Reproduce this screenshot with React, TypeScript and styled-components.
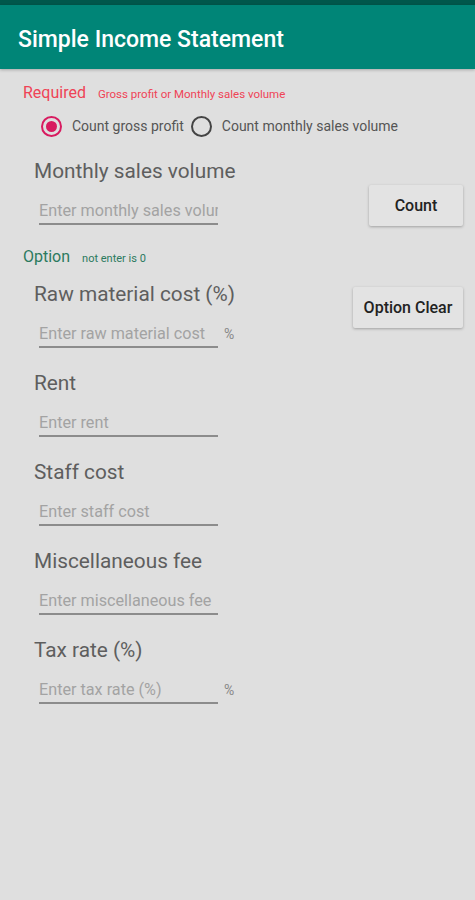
import React from 'react';

import styled, { createGlobalStyle } from 'styled-components';

const GlobalStyle = createGlobalStyle`
  html, body {
    margin: 0;
    padding: 0;
    background: #dfdfdf;
    font-family: Roboto, 'Noto Sans', sans-serif;
  }
`;

const Page = styled.div`
  width: 475px;
  min-height: 900px;
  background: #dfdfdf;
`;

const StatusBar = styled.div`
  height: 5px;
  background: #00574b;
`;

const AppBar = styled.div`
  display: flex;
  align-items: center;
  box-sizing: border-box;
  height: 64px;
  padding: 4px 0 0 18px;
  background: #008577;
  box-shadow: 0 1px 3px rgba(0, 0, 0, 0.25);
  color: #fff;
  font-size: 23px;
  font-weight: 500;
`;

const Content = styled.div`
  display: flex;
  flex-direction: column;
  padding: 14px 12px 0 23px;
`;

const SectionHead = styled.div<{ $color: string; $mt?: number }>`
  display: flex;
  align-items: baseline;
  gap: 12px;
  height: 20px;
  margin-top: ${(p) => p.$mt || 0}px;
  color: ${(p) => p.$color};
  font-size: 16px;
`;

const Note = styled.span<{ $size: number }>`
  font-size: ${(p) => p.$size}px;
`;

const RadioGroup = styled.div`
  display: flex;
  align-items: center;
  height: 28px;
  margin: 9px 0 0 18px;
  color: #555;
  font-size: 14px;
`;

const RadioItem = styled.label`
  display: flex;
  align-items: center;
  gap: 10px;
  margin-right: 7px;
`;

const RadioCircle = styled.span<{ $checked?: boolean }>`
  display: flex;
  align-items: center;
  justify-content: center;
  box-sizing: border-box;
  width: 21px;
  height: 21px;
  border: 2px solid ${(p) => (p.$checked ? '#d81b60' : '#444')};
  border-radius: 50%;

  &::after {
    content: '';
    display: ${(p) => (p.$checked ? 'block' : 'none')};
    width: 11px;
    height: 11px;
    border-radius: 50%;
    background: #d81b60;
  }
`;

const FieldRow = styled.div<{ $mt: number }>`
  display: flex;
  justify-content: space-between;
  align-items: flex-start;
  margin-top: ${(p) => p.$mt}px;
`;

const Field = styled.div`
  display: flex;
  flex-direction: column;
  padding-left: 11px;
`;

const Label = styled.div`
  height: 24px;
  line-height: 24px;
  color: #5e5e5e;
  font-size: 20.8px;
`;

const InputLine = styled.div`
  display: flex;
  align-items: center;
  gap: 6px;
  margin: 14px 0 0 5px;
`;

const Input = styled.input`
  box-sizing: border-box;
  width: 179px;
  height: 28px;
  padding: 0;
  border: none;
  border-bottom: 2px solid #8c8c8c;
  background: transparent;
  color: #333;
  font-family: Roboto, sans-serif;
  font-size: 16.2px;
  outline: none;

  &::placeholder {
    color: #a3a3a3;
  }
`;

const Unit = styled.span`
  color: #888;
  font-size: 14px;
`;

const Button = styled.button<{ $w: number; $mt: number }>`
  width: ${(p) => p.$w}px;
  height: 41px;
  margin-top: ${(p) => p.$mt}px;
  border: none;
  border-radius: 2px;
  background: #e3e3e3;
  box-shadow: 0 1px 3px rgba(0, 0, 0, 0.28);
  color: #222;
  font-family: Roboto, sans-serif;
  font-size: 16px;
  font-weight: 500;
`;

type FieldProps = {
  label: string;
  placeholder: string;
  unit?: string;
};

const InputField = ({ label, placeholder, unit }: FieldProps) => (
  <Field>
    <Label>{label}</Label>
    <InputLine>
      <Input placeholder={placeholder} />
      {unit && <Unit>{unit}</Unit>}
    </InputLine>
  </Field>
);

const optionFields = [
  { label: 'Rent', placeholder: 'Enter rent' },
  { label: 'Staff cost', placeholder: 'Enter staff cost' },
  { label: 'Miscellaneous fee', placeholder: 'Enter miscellaneous fee' },
  { label: 'Tax rate (%)', placeholder: 'Enter tax rate (%)', unit: '%' },
];

const App = () => {
  return (
    <Page>
      <GlobalStyle />
      <StatusBar />
      <AppBar>Simple Income Statement</AppBar>
      <Content>
        <SectionHead $color="#ef4356">
          Required
          <Note $size={11.5}>Gross profit or Monthly sales volume</Note>
        </SectionHead>
        <RadioGroup>
          <RadioItem>
            <RadioCircle $checked />
            Count gross profit
          </RadioItem>
          <RadioItem>
            <RadioCircle />
            Count monthly sales volume
          </RadioItem>
        </RadioGroup>
        <FieldRow $mt={19}>
          <InputField label="Monthly sales volume" placeholder="Enter monthly sales volume" />
          <Button $w={94} $mt={26}>Count</Button>
        </FieldRow>
        <SectionHead $color="#2b7a5e" $mt={21}>
          Option
          <Note $size={11}>not enter is 0</Note>
        </SectionHead>
        <FieldRow $mt={15}>
          <InputField label="Raw material cost (%)" placeholder="Enter raw material cost" unit="%" />
          <Button $w={110} $mt={5}>Option Clear</Button>
        </FieldRow>
        {optionFields.map((f) => (
          <FieldRow key={f.label} $mt={23}>
            <InputField label={f.label} placeholder={f.placeholder} unit={f.unit} />
          </FieldRow>
        ))}
      </Content>
    </Page>
  );
};

export default App;
